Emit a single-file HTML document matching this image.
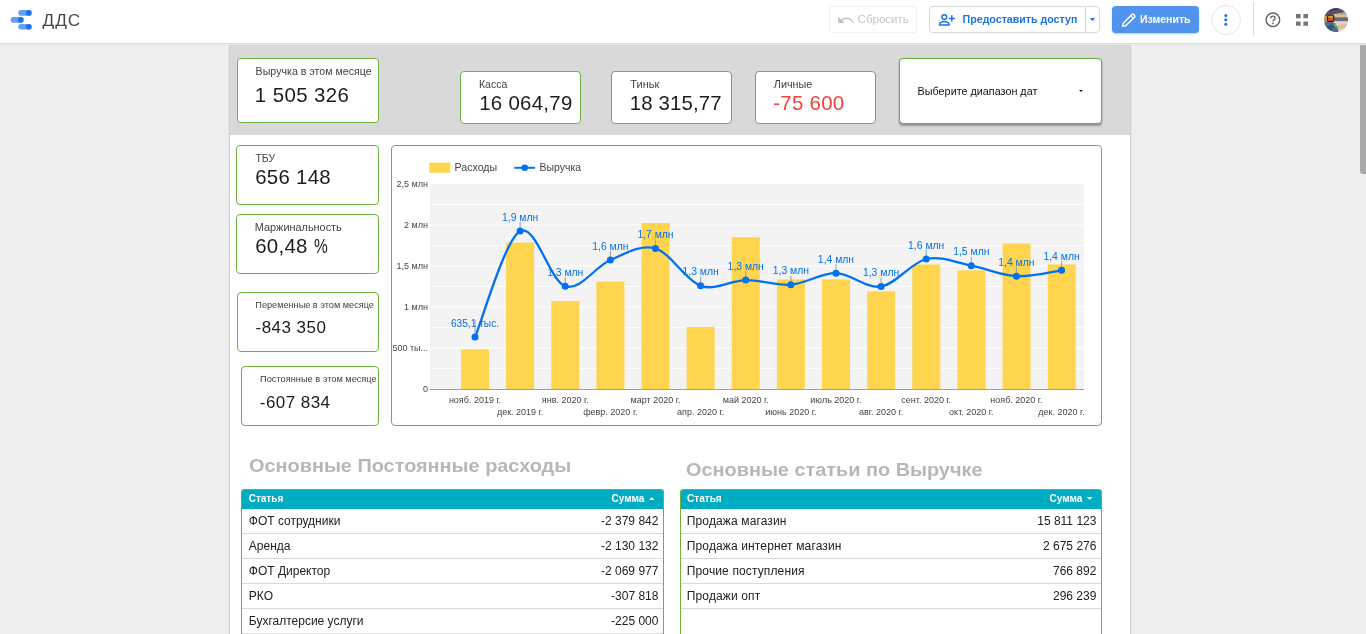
<!DOCTYPE html>
<html lang="ru">
<head>
<meta charset="utf-8">
<title>ДДС</title>
<style>
*{box-sizing:border-box;margin:0;padding:0}
html,body{width:1366px;height:634px;overflow:hidden;background:#eeeeee;font-family:"Liberation Sans",sans-serif;color:#212121}
.abs{position:absolute}
#root{position:absolute;left:0;top:0;width:1366px;height:634px;overflow:hidden;will-change:transform}
#hdr{position:absolute;z-index:5;left:0;top:0;width:1366px;height:44px;background:#fff;border-bottom:1px solid #dbdbdb;box-shadow:0 1px 0 #e8e8e8}
#page{position:absolute;left:230px;top:45px;width:900px;height:600px;background:#fff;box-shadow:-1px 0 0 #d2d2d2,1px 0 0 #d2d2d2,0 0 3px rgba(0,0,0,.14)}
#band{position:absolute;left:0;top:0;width:900px;height:90px;background:#d9d9d9}
.card{position:absolute;background:#fff;border:1px solid #6fb13f;border-radius:4px}
.t{position:absolute;line-height:1;white-space:nowrap}
.lb{font-size:10.5px;color:#424242}
.vl{font-size:20.4px;color:#1c1c1c;letter-spacing:.3px}
.vs{font-size:17px;color:#1c1c1c;letter-spacing:.45px}
#datec{box-shadow:0 2px 2px rgba(0,0,0,.3),0 0 1px rgba(0,0,0,.2)}
.h2{font-weight:bold;color:#b7b7b7}
.tbl{position:absolute;border:1px solid #6fb13f;border-bottom:none;border-radius:3px 3px 0 0;background:#fff;overflow:hidden}
.tbl .th{position:absolute;left:0;top:0;right:0;height:19px;background:#00acc1;color:#fff;font-weight:bold;font-size:10px}
.tbl .r{position:absolute;left:0;right:0;height:25px;border-bottom:1px solid #d8d8d8;font-size:12px;color:#212121}
.tbl .r .t{top:5.6px}
.tbl .r .a{left:6.8px}
.tbl .r .b{right:4.6px}
</style>
</head>
<body>
<div id="root">
<div id="hdr">
  <!-- Data Studio logo -->
  <svg class="abs" style="left:8px;top:8px" width="28" height="24" viewBox="8 8 28 24">
    <rect x="18.3" y="10.1" width="13.3" height="5.6" rx="2.8" fill="#669df6"/><circle cx="28.8" cy="12.9" r="2.8" fill="#1a73e8"/>
    <rect x="10.5" y="17" width="13.1" height="5.7" rx="2.85" fill="#669df6"/><circle cx="20.8" cy="19.85" r="2.85" fill="#1a73e8"/>
    <rect x="18.3" y="24" width="13.3" height="5.6" rx="2.8" fill="#669df6"/><circle cx="28.8" cy="26.8" r="2.8" fill="#1a73e8"/>
  </svg>
  <span class="t" id="title" style="left:42.6px;top:11.9px;font-size:17.2px;letter-spacing:.95px;color:#484848">ДДС</span>

  <!-- reset (disabled) -->
  <div class="abs" style="left:829px;top:6px;width:88px;height:27px;border:1px solid #f1f1f1;border-radius:3px"></div>
  <svg class="abs" style="left:838px;top:16px" width="16" height="8" viewBox="0 0 16 8"><path d="M0.2 0.6V7h6.3L4 4.5C5.2 3.5 6.8 2.9 8.5 2.9c2.9 0 5.3 1.7 6.2 4.1l1.2-.4C14.8 3.6 11.9 1.5 8.5 1.5c-2.1 0-4 .8-5.5 2z" fill="#c2c2c2"/></svg>
  <span class="t" style="left:857.6px;top:14px;font-size:11.5px;color:#c4c4c4">Сбросить</span>

  <!-- share -->
  <div class="abs" style="left:929px;top:6px;width:171px;height:27px;border:1px solid #d6d8db;border-radius:4px"></div>
  <div class="abs" style="left:1085px;top:7px;width:1px;height:25px;background:#d6d8db"></div>
  <svg class="abs" style="left:938px;top:13px" width="18" height="14" viewBox="0 0 18 14">
    <circle cx="6.3" cy="4.1" r="2.4" fill="none" stroke="#1a73e8" stroke-width="1.5"/>
    <path d="M1.5 12.1v-.9c0-1.7 3.200-2.6 4.800-2.600s4.800.9 4.8 2.6v.9z" fill="none" stroke="#1a73e8" stroke-width="1.5" stroke-linejoin="round"/>
    <path d="M13.8 2.3v6.2M10.7 5.4h6.2" stroke="#1a73e8" stroke-width="1.5"/>
  </svg>
  <span class="t" style="left:962.6px;top:13.8px;font-size:10.63px;font-weight:bold;color:#1a73e8">Предоставить доступ</span>
  <svg class="abs" style="left:1090px;top:18px" width="6" height="4" viewBox="0 0 6 4"><path d="M0 0h5L2.5 3.2z" fill="#1a73e8"/></svg>

  <!-- edit -->
  <div class="abs" style="left:1112px;top:6px;width:87px;height:27px;background:#5094ed;border-radius:4px;box-shadow:0 1px 2px rgba(80,148,237,.45)"></div>
  <svg class="abs" style="left:1121px;top:12px" width="16" height="16" viewBox="0 0 16 16"><path d="M1.7 14.3l.6-3.1 8.600-8.7c.5-.5 1.300-.5 1.8 0l.8.8c.5.500.5 1.3 0 1.8l-8.7 8.6z" fill="none" stroke="#fff" stroke-width="1.5" stroke-linejoin="round"/><path d="M9.6 3.9l2.7 2.7" stroke="#fff" stroke-width="1.1"/></svg>
  <span class="t" style="left:1140px;top:13.8px;font-size:10.5px;font-weight:bold;color:#fff">Изменить</span>

  <!-- kebab -->
  <div class="abs" style="left:1211px;top:4.5px;width:30px;height:30px;border:1px solid #e6e6e6;border-radius:50%"></div>
  <svg class="abs" style="left:1223px;top:13px" width="6" height="14" viewBox="0 0 6 14"><circle cx="2.8" cy="2.4" r="1.5" fill="#1a73e8"/><circle cx="2.8" cy="6.7" r="1.5" fill="#1a73e8"/><circle cx="2.8" cy="11.2" r="1.5" fill="#1a73e8"/></svg>

  <div class="abs" style="left:1253px;top:2px;width:1px;height:34px;background:#dcdcdc"></div>

  <!-- help -->
  <svg class="abs" style="left:1264px;top:11px" width="18" height="18" viewBox="0 0 18 18">
    <circle cx="8.9" cy="8.8" r="6.8" fill="none" stroke="#626262" stroke-width="1.4"/>
    <path d="M6.7 7.3c0-1.3 1-2.2 2.200-2.200s2.200.9 2.2 2.1c0 1.500-2.1 1.700-2.1 3.4" fill="none" stroke="#626262" stroke-width="1.4"/>
    <circle cx="9" cy="12.4" r=".9" fill="#626262"/>
  </svg>
  <!-- apps grid -->
  <svg class="abs" style="left:1296px;top:14px" width="12" height="12" viewBox="0 0 12 12"><path d="M0 0h4.6v4.3H0zM7.4 0H12v4.3H7.4zM0 7.4h4.6v4.4H0zM7.4 7.4H12v4.4H7.4z" fill="#757575"/></svg>
  <!-- avatar -->
  <svg class="abs" style="left:1324px;top:7.8px" width="24" height="24" viewBox="0 0 24 24">
    <defs>
      <clipPath id="avc"><circle cx="12" cy="12.1" r="12"/></clipPath>
      <filter id="avb" x="-20%" y="-20%" width="140%" height="140%"><feGaussianBlur stdDeviation=".7"/></filter>
    </defs>
    <g clip-path="url(#avc)">
      <g filter="url(#avb)">
        <rect x="-2" y="-2" width="28" height="28" fill="#d9c4a8"/>
        <rect x="-2" y="-2" width="28" height="7" fill="#3a3354"/>
        <path d="M-2 9L26 2.5v5L-2 11z" fill="#b59c94"/>
        <path d="M-2 4.5L26 -1v3.5L-2 9z" fill="#5d4f68"/>
        <rect x="10" y="6.5" width="16" height="3" fill="#d8c090"/>
        <rect x="9" y="9.3" width="17" height="4" fill="#6f6676"/>
        <rect x="9" y="13.2" width="17" height="12" fill="#e4d3ba"/>
        <path d="M14 17l12-2v4l-12 3z" fill="#d9bfa6"/>
        <rect x="-2" y="8" width="5" height="7" fill="#c48f58"/>
        <path d="M-1 16c2-2 5-3 8-2.5 3 .5 5 2.5 6.5 5.5l1.5 7H-2z" fill="#46708a"/>
        <path d="M2 20l5-3 3 1-4 6z" fill="#34506f"/>
        <path d="M9 15l3 2 1 4z" fill="#8fb0a8"/>
        <rect x="3" y="6.8" width="7.2" height="7.2" rx="1.5" fill="#2a1d2c"/>
        <rect x="4.2" y="7.8" width="4.8" height="2.4" fill="#c7ac3c"/>
        <rect x="4.2" y="9.8" width="5" height="3.2" fill="#e0452a"/>
      </g>
    </g>
  </svg>
</div>
<div id="page">
  <div id="band"></div>
</div>

<!-- KPI cards (body coords) -->
<div class="card" style="left:237px;top:58px;width:142px;height:65px"></div>
<div class="card" style="left:460px;top:71px;width:121px;height:53px"></div>
<div class="card" style="left:611px;top:71px;width:121px;height:53px"></div>
<div class="card" style="left:755px;top:71px;width:121px;height:53px"></div>
<div class="card" id="datec" style="left:899px;top:58px;width:203px;height:66px"></div>
<div class="card" style="left:236px;top:145px;width:143px;height:60px"></div>
<div class="card" style="left:236px;top:214px;width:143px;height:60px"></div>
<div class="card" style="left:237px;top:292px;width:142px;height:60px"></div>
<div class="card" style="left:241px;top:366px;width:138px;height:60px"></div>

<span class="t lb" style="left:255.6px;top:65.8px;font-size:10.65px">Выручка в этом месяце</span>
<span class="t vl" style="left:254.8px;top:85px;letter-spacing:.42px">1 505 326</span>
<span class="t lb" style="left:479px;top:78.8px">Касса</span>
<span class="t vl" style="left:479.2px;top:93.2px">16 064,79</span>
<span class="t lb" style="left:630.3px;top:78.8px;font-size:11px">Тиньк</span>
<span class="t vl" style="left:629.8px;top:93.4px;letter-spacing:.14px">18 315,77</span>
<span class="t lb" style="left:773.8px;top:78.7px;font-size:10.8px">Личные</span>
<span class="t vl" style="left:773.2px;top:93.3px;color:#f44336">-75 600</span>
<span class="t" style="left:917.6px;top:85.6px;font-size:10.8px;color:#111">Выберите диапазон дат</span>
<svg class="abs" style="left:1078px;top:89px" width="6" height="4" viewBox="0 0 6 4"><path d="M1 1h4L3 3z" fill="#222"/></svg>
<span class="t lb" style="left:255.4px;top:152.7px">ТБУ</span>
<span class="t vl" style="left:255.2px;top:167.3px">656 148</span>
<span class="t lb" style="left:254.8px;top:221.6px;font-size:10.9px">Маржинальность</span>
<span class="t vl" style="left:255.2px;top:236.2px">60,48 <span style="display:inline-block;transform:scaleX(.76);transform-origin:0 50%">%</span></span>
<span class="t lb" style="left:255.3px;top:301px;font-size:9.17px">Переменные в этом месяце</span>
<span class="t vs" style="left:255.6px;top:318.8px">-843 350</span>
<span class="t lb" style="left:260.1px;top:375px;font-size:9.22px">Постоянные в этом месяце</span>
<span class="t vs" style="left:259.8px;top:394.4px">-607 834</span>

<div class="card" id="chart" style="left:391px;top:145px;width:711px;height:281px"></div>
<!--CHART-->
<svg id="chartsvg" class="abs" style="left:391px;top:145px" width="711" height="281" viewBox="0 0 711 281" font-family="Liberation Sans, sans-serif">
<rect x="39" y="39" width="654" height="205" fill="#f3f3f3"/>
<rect x="39" y="59" width="654" height="1" fill="#fdfdfd"/>
<rect x="39" y="79" width="654" height="2" fill="#f9f9f9"/>
<rect x="39" y="100" width="654" height="1" fill="#fdfdfd"/>
<rect x="39" y="120" width="654" height="2" fill="#f9f9f9"/>
<rect x="39" y="141" width="654" height="1" fill="#fdfdfd"/>
<rect x="39" y="161" width="654" height="2" fill="#f9f9f9"/>
<rect x="39" y="182" width="654" height="1" fill="#fdfdfd"/>
<rect x="39" y="202" width="654" height="2" fill="#f9f9f9"/>
<rect x="39" y="223" width="654" height="1" fill="#fdfdfd"/>
<rect x="70.00" y="204.30" width="28" height="39.70" fill="#ffd54f"/>
<rect x="115.13" y="97.60" width="28" height="146.40" fill="#ffd54f"/>
<rect x="160.26" y="156.00" width="28" height="88.00" fill="#ffd54f"/>
<rect x="205.39" y="136.60" width="28" height="107.40" fill="#ffd54f"/>
<rect x="250.52" y="78.00" width="28" height="166.00" fill="#ffd54f"/>
<rect x="295.65" y="182.00" width="28" height="62.00" fill="#ffd54f"/>
<rect x="340.78" y="92.20" width="28" height="151.80" fill="#ffd54f"/>
<rect x="385.91" y="134.40" width="28" height="109.60" fill="#ffd54f"/>
<rect x="431.04" y="134.40" width="28" height="109.60" fill="#ffd54f"/>
<rect x="476.17" y="146.30" width="28" height="97.70" fill="#ffd54f"/>
<rect x="521.30" y="119.50" width="28" height="124.50" fill="#ffd54f"/>
<rect x="566.43" y="125.30" width="28" height="118.70" fill="#ffd54f"/>
<rect x="611.56" y="98.50" width="28" height="145.50" fill="#ffd54f"/>
<rect x="656.69" y="119.50" width="28" height="124.50" fill="#ffd54f"/>
<rect x="39" y="244" width="654" height="1" fill="#9e9e9e"/>
<path d="M84.0,192 C91.52,174.35 114.08,94.55 129.12,86.1 C144.16,77.65 159.2,136.48 174.24,141.3 C189.28,146.12 204.32,121.3 219.36,115 C234.4,108.7 249.44,99.2 264.48,103.5 C279.52,107.8 294.56,135.53 309.6,140.8 C324.64,146.07 339.68,135.28 354.72,135.1 C369.76,134.92 384.8,140.85 399.84,139.7 C414.88,138.55 429.92,127.9 444.96,128.2 C460.0,128.5 475.04,143.87 490.08,141.5 C505.12,139.13 520.16,117.47 535.2,114 C550.24,110.53 565.28,117.83 580.32,120.7 C595.36,123.57 610.4,130.43 625.44,131.2 C640.48,131.97 663.04,126.28 670.56,125.3" fill="none" stroke="#0072f0" stroke-width="2.3" stroke-linejoin="round"/>
<rect x="83.50" y="175.00" width="1" height="14" fill="#9e9e9e"/>
<rect x="128.62" y="77.10" width="1" height="6" fill="#9e9e9e"/>
<rect x="173.74" y="132.30" width="1" height="6" fill="#9e9e9e"/>
<rect x="218.86" y="106.00" width="1" height="6" fill="#9e9e9e"/>
<rect x="263.98" y="94.50" width="1" height="6" fill="#9e9e9e"/>
<rect x="309.10" y="131.80" width="1" height="6" fill="#9e9e9e"/>
<rect x="354.22" y="126.10" width="1" height="6" fill="#9e9e9e"/>
<rect x="399.34" y="130.70" width="1" height="6" fill="#9e9e9e"/>
<rect x="444.46" y="119.20" width="1" height="6" fill="#9e9e9e"/>
<rect x="489.58" y="132.50" width="1" height="6" fill="#9e9e9e"/>
<rect x="534.70" y="105.00" width="1" height="6" fill="#9e9e9e"/>
<rect x="579.82" y="111.70" width="1" height="6" fill="#9e9e9e"/>
<rect x="624.94" y="122.20" width="1" height="6" fill="#9e9e9e"/>
<rect x="670.06" y="116.30" width="1" height="6" fill="#9e9e9e"/>
<circle cx="84.0" cy="192" r="3.5" fill="#0072f0"/>
<circle cx="129.12" cy="86.1" r="3.5" fill="#0072f0"/>
<circle cx="174.24" cy="141.3" r="3.5" fill="#0072f0"/>
<circle cx="219.36" cy="115" r="3.5" fill="#0072f0"/>
<circle cx="264.48" cy="103.5" r="3.5" fill="#0072f0"/>
<circle cx="309.6" cy="140.8" r="3.5" fill="#0072f0"/>
<circle cx="354.72" cy="135.1" r="3.5" fill="#0072f0"/>
<circle cx="399.84" cy="139.7" r="3.5" fill="#0072f0"/>
<circle cx="444.96" cy="128.2" r="3.5" fill="#0072f0"/>
<circle cx="490.08" cy="141.5" r="3.5" fill="#0072f0"/>
<circle cx="535.2" cy="114" r="3.5" fill="#0072f0"/>
<circle cx="580.32" cy="120.7" r="3.5" fill="#0072f0"/>
<circle cx="625.44" cy="131.2" r="3.5" fill="#0072f0"/>
<circle cx="670.56" cy="125.3" r="3.5" fill="#0072f0"/>
<text x="84.0" y="182" text-anchor="middle" font-size="11" fill="#0072f0" textLength="48.2" lengthAdjust="spacingAndGlyphs">635,1 тыс.</text>
<text x="129.12" y="76" text-anchor="middle" font-size="11" fill="#0072f0" textLength="36.2" lengthAdjust="spacingAndGlyphs">1,9 млн</text>
<text x="174.24" y="131" text-anchor="middle" font-size="11" fill="#0072f0" textLength="36.2" lengthAdjust="spacingAndGlyphs">1,3 млн</text>
<text x="219.36" y="105" text-anchor="middle" font-size="11" fill="#0072f0" textLength="36.2" lengthAdjust="spacingAndGlyphs">1,6 млн</text>
<text x="264.48" y="93" text-anchor="middle" font-size="11" fill="#0072f0" textLength="36.2" lengthAdjust="spacingAndGlyphs">1,7 млн</text>
<text x="309.6" y="130" text-anchor="middle" font-size="11" fill="#0072f0" textLength="36.2" lengthAdjust="spacingAndGlyphs">1,3 млн</text>
<text x="354.72" y="125" text-anchor="middle" font-size="11" fill="#0072f0" textLength="36.2" lengthAdjust="spacingAndGlyphs">1,3 млн</text>
<text x="399.84" y="129" text-anchor="middle" font-size="11" fill="#0072f0" textLength="36.2" lengthAdjust="spacingAndGlyphs">1,3 млн</text>
<text x="444.96" y="118" text-anchor="middle" font-size="11" fill="#0072f0" textLength="36.2" lengthAdjust="spacingAndGlyphs">1,4 млн</text>
<text x="490.08" y="131" text-anchor="middle" font-size="11" fill="#0072f0" textLength="36.2" lengthAdjust="spacingAndGlyphs">1,3 млн</text>
<text x="535.2" y="104" text-anchor="middle" font-size="11" fill="#0072f0" textLength="36.2" lengthAdjust="spacingAndGlyphs">1,6 млн</text>
<text x="580.32" y="110" text-anchor="middle" font-size="11" fill="#0072f0" textLength="36.2" lengthAdjust="spacingAndGlyphs">1,5 млн</text>
<text x="625.44" y="121" text-anchor="middle" font-size="11" fill="#0072f0" textLength="36.2" lengthAdjust="spacingAndGlyphs">1,4 млн</text>
<text x="670.56" y="115" text-anchor="middle" font-size="11" fill="#0072f0" textLength="36.2" lengthAdjust="spacingAndGlyphs">1,4 млн</text>
<text x="37" y="42.00" text-anchor="end" font-size="9" fill="#444">2,5 млн</text>
<text x="37" y="83.00" text-anchor="end" font-size="9" fill="#444">2 млн</text>
<text x="37" y="124.00" text-anchor="end" font-size="9" fill="#444">1,5 млн</text>
<text x="37" y="165.00" text-anchor="end" font-size="9" fill="#444">1 млн</text>
<text x="37" y="206.00" text-anchor="end" font-size="9" fill="#444">500 ты...</text>
<text x="37" y="247.00" text-anchor="end" font-size="9" fill="#444">0</text>
<text x="84.0" y="257.70" text-anchor="middle" font-size="9" fill="#444">нояб. 2019 г.</text>
<text x="129.12" y="269.70" text-anchor="middle" font-size="9" fill="#444">дек. 2019 г.</text>
<text x="174.24" y="257.70" text-anchor="middle" font-size="9" fill="#444">янв. 2020 г.</text>
<text x="219.36" y="269.70" text-anchor="middle" font-size="9" fill="#444">февр. 2020 г.</text>
<text x="264.48" y="257.70" text-anchor="middle" font-size="9" fill="#444">март 2020 г.</text>
<text x="309.6" y="269.70" text-anchor="middle" font-size="9" fill="#444">апр. 2020 г.</text>
<text x="354.72" y="257.70" text-anchor="middle" font-size="9" fill="#444">май 2020 г.</text>
<text x="399.84" y="269.70" text-anchor="middle" font-size="9" fill="#444">июнь 2020 г.</text>
<text x="444.96" y="257.70" text-anchor="middle" font-size="9" fill="#444">июль 2020 г.</text>
<text x="490.08" y="269.70" text-anchor="middle" font-size="9" fill="#444">авг. 2020 г.</text>
<text x="535.2" y="257.70" text-anchor="middle" font-size="9" fill="#444">сент. 2020 г.</text>
<text x="580.32" y="269.70" text-anchor="middle" font-size="9" fill="#444">окт. 2020 г.</text>
<text x="625.44" y="257.70" text-anchor="middle" font-size="9" fill="#444">нояб. 2020 г.</text>
<text x="670.56" y="269.70" text-anchor="middle" font-size="9" fill="#444">дек. 2020 г.</text>
<rect x="38.3" y="17.6" width="21" height="10.2" fill="#ffd54f"/>
<text x="63.6" y="25.9" font-size="10.5" fill="#444" textLength="42.6" lengthAdjust="spacingAndGlyphs">Расходы</text>
<rect x="123.3" y="21.8" width="20.7" height="2" fill="#0072f0"/>
<circle cx="133.7" cy="22.8" r="3.3" fill="#0072f0"/>
<text x="148.4" y="25.9" font-size="10.5" fill="#444" textLength="41.7" lengthAdjust="spacingAndGlyphs">Выручка</text>
</svg>
<!--/CHART-->

<span class="t h2" style="left:248.7px;top:456.7px;font-size:18.6px;transform:scaleX(1.069);transform-origin:0 0">Основные Постоянные расходы</span>
<span class="t h2" style="left:686.1px;top:460.8px;font-size:18.6px;transform:scaleX(1.069);transform-origin:0 0">Основные статьи по Выручке</span>

<div class="tbl" style="left:241px;top:489px;width:423px;height:160px">
  <div class="th"><span class="t" style="left:6.7px;top:4.2px">Статья</span><span class="t" style="right:18.6px;top:4.2px">Сумма</span><svg class="abs" style="right:8.2px;top:7.4px" width="6" height="3.6" viewBox="0 0 5 3"><path d="M0 2.6L2.3 0l2.3 2.6z" fill="#fff"/></svg></div>
  <div class="r" style="top:19px"><span class="t a">ФОТ сотрудники</span><span class="t b">-2 379 842</span></div>
  <div class="r" style="top:44px"><span class="t a">Аренда</span><span class="t b">-2 130 132</span></div>
  <div class="r" style="top:69px"><span class="t a">ФОТ Директор</span><span class="t b">-2 069 977</span></div>
  <div class="r" style="top:94px"><span class="t a">РКО</span><span class="t b">-307 818</span></div>
  <div class="r" style="top:119px"><span class="t a">Бухгалтерсие услуги</span><span class="t b">-225 000</span></div>
</div>
<div class="tbl" style="left:680px;top:489px;width:422px;height:160px">
  <div class="th"><span class="t" style="left:6.1px;top:4.2px">Статья</span><span class="t" style="right:18.6px;top:4.2px">Сумма</span><svg class="abs" style="right:8.2px;top:7.4px" width="6" height="3.6" viewBox="0 0 5 3"><path d="M0 0h4.6L2.3 2.6z" fill="#fff"/></svg></div>
  <div class="r" style="top:19px"><span class="t a" style="left:5.8px;letter-spacing:.13px">Продажа магазин</span><span class="t b">15 811 123</span></div>
  <div class="r" style="top:44px"><span class="t a" style="left:5.8px;letter-spacing:.13px">Продажа интернет магазин</span><span class="t b">2 675 276</span></div>
  <div class="r" style="top:69px"><span class="t a" style="left:5.8px;letter-spacing:.13px">Прочие поступления</span><span class="t b">766 892</span></div>
  <div class="r" style="top:94px"><span class="t a" style="left:5.8px;letter-spacing:.13px">Продажи опт</span><span class="t b">296 239</span></div>
</div>
<div class="abs" style="left:1360px;top:44px;width:9px;height:130px;background:#aaaaaa;border-radius:3px"></div>
</div>
</body>
</html>
